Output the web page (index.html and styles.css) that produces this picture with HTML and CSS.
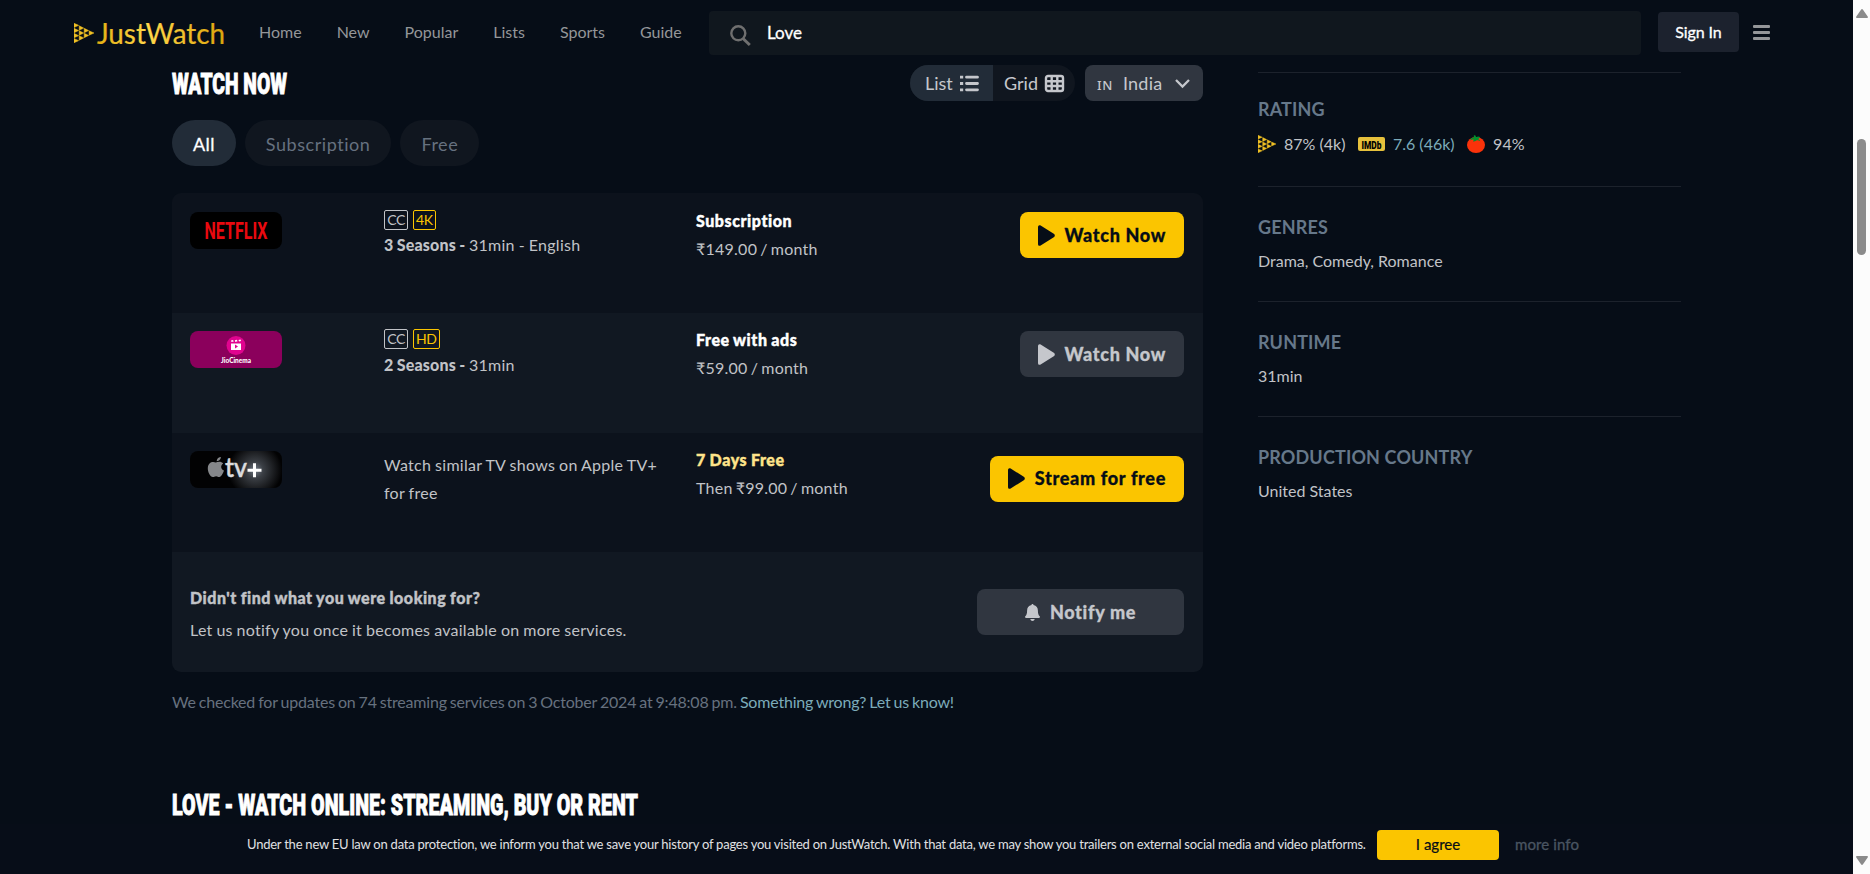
FILE: index.html
```html
<!DOCTYPE html>
<html lang="en">
<head>
<meta charset="utf-8">
<title>Love - JustWatch</title>
<link rel="stylesheet" href="styles.css">
</head>
<body>
<svg class="defs" width="0" height="0">
  <defs>
    <linearGradient id="gold" x1="0" x2="1" y1="0" y2="0"><stop offset="0" stop-color="#e3b012"/><stop offset=".4" stop-color="#ffd84a"/><stop offset="1" stop-color="#dba40a"/></linearGradient>
    <radialGradient id="glow" gradientUnits="userSpaceOnUse" cx="65" cy="19" r="27"><stop offset="0" stop-color="#737c88"/><stop offset=".3" stop-color="#3b3f45"/><stop offset="1" stop-color="#020203"/></radialGradient>
    <symbol id="jw" viewBox="0 0 18 22" preserveAspectRatio="none">
      <path fill="#f0c024" stroke="#f0c024" stroke-width=".5" d="M0 .3l4.200 2.300L0 5zM0 5.800l4.200 2.500L0 10.700zM0 11.400l4.200 2.500L0 16.300zM0 17l4.200 2.400L0 21.700zM4.700 3.100l4 2.500-4 2.400zM4.700 8.600l4 2.400-4 2.400zM4.700 14l4 2.400-4 2.500zM9.200 5.900l4 2.400-4 2.400zM9.200 11.300l4 2.400-4 2.400zM13.600 8.600L18 11l-4.400 2.400z"/>
    </symbol>
    <symbol id="play" viewBox="0 0 18 22" preserveAspectRatio="none"><path fill="currentColor" d="M0 2.200C0 .5 1.300-.4 2.800.5l13.900 8.700c1.500.9 1.500 2.700 0 3.600L2.800 21.500C1.300 22.400 0 21.500 0 19.800z"/></symbol>
  </defs>
</svg>
<div class="page">
  <header class="bar">
    <a class="logo"><svg width="152" height="36" viewBox="0 0 152 36"><use href="#jw" x="0" y="5" width="20" height="20"/><text class="wordmark" x="23" y="25.500" textLength="128" lengthAdjust="spacingAndGlyphs" fill="url(#gold)" stroke="url(#gold)">JustWatch</text></svg></a>
    <nav class="nav"><a>Home</a><a>New</a><a>Popular</a><a>Lists</a><a>Sports</a><a>Guide</a></nav>
    <div class="search">
      <svg width="21" height="21" viewBox="0 0 21 21" fill="none" stroke="#6f6f6f" stroke-width="2.400"><circle cx="8.300" cy="8.300" r="7"/><path d="M13 13.500l6.800 6.500" stroke-width="3"/></svg>
      <span>Love</span>
    </div>
    <button class="signin">Sign In</button>
    <div class="burger"><i></i><i></i><i></i></div>
  </header>

  <div class="columns">
    <main class="main">
      <div class="titlebar">
        <svg class="heading" width="120" height="36"><text x="0" y="28.500" textLength="115" lengthAdjust="spacingAndGlyphs">WATCH NOW</text></svg>
        <div class="controls">
          <div class="toggle">
            <span class="seg on">List <svg width="19" height="17" viewBox="0 0 19 17" fill="none" stroke="currentColor" stroke-width="2.800"><path stroke-linecap="round" d="M6.500 2.200h11M6.500 8.500h11M6.500 14.800h11"/><path d="M0 2.200h3.200M0 8.500h3.200M0 14.800h3.200"/></svg></span>
            <span class="seg">Grid <svg width="19" height="17" viewBox="0 0 19 17" fill="none" stroke="currentColor" stroke-width="2.400"><rect x="1" y="1" width="17" height="15" rx="2"/><path d="M1 6.200h17M1 11h17M6.700 1v15M12.300 1v15"/></svg></span>
          </div>
          <div class="country"><small>IN</small><span>India</span><svg width="15" height="9" viewBox="0 0 15 9" fill="none" stroke="currentColor" stroke-width="2.300"><path d="M1 1l6.500 6.500L14 1"/></svg></div>
        </div>
      </div>
      <div class="filters"><span class="pill on">All</span><span class="pill">Subscription</span><span class="pill">Free</span></div>

      <section class="offers">
        <div class="row">
          <svg class="provider" width="92" height="37"><rect width="92" height="37" fill="#000"/><text class="netflix" x="14.500" y="26.500" textLength="63" lengthAdjust="spacingAndGlyphs">NETFLIX</text></svg>
          <div class="info"><div class="tags"><b class="tag">CC</b><b class="tag gold">4K</b></div><p class="up"><strong>3 Seasons - </strong>31min - English</p></div>
          <div class="price"><strong>Subscription</strong><span>₹149.00 / month</span></div>
          <button class="btn"><svg width="17" height="21"><use href="#play" width="17" height="21"/></svg>Watch Now</button>
        </div>
        <div class="row alt">
          <svg class="provider" width="92" height="37"><rect width="92" height="37" fill="#8b005c"/><circle cx="46" cy="14.500" r="9.500" fill="#e0048f"/><path fill="#fff" d="M41 12.500h10v6.500h-10zM41 9.500l2-.6.8 1.600-2.300.6zM44.800 9.300l2-.6.8 1.600-2.300.6zM48.500 9l2-.6.6 1.600-2.100.6z"/><path fill="#e0048f" d="M45 13.500l3 2-3 2z"/><text class="jio" x="31" y="32.300" textLength="30" lengthAdjust="spacingAndGlyphs">JioCinema</text></svg>
          <div class="info"><div class="tags"><b class="tag">CC</b><b class="tag gold">HD</b></div><p><strong>2 Seasons - </strong>31min</p></div>
          <div class="price"><strong>Free with ads</strong><span>₹59.00 / month</span></div>
          <button class="btn grey"><svg width="17" height="21"><use href="#play" width="17" height="21"/></svg>Watch Now</button>
        </div>
        <div class="row similar">
          <svg class="provider" width="92" height="37"><rect width="92" height="37" fill="url(#glow)"/><path fill="#85878a" d="M30.800 6c.2 2-1.700 4.200-4 4.200C26.600 8.100 28.600 6.100 30.800 6zM33.200 12.400c-3 1.800-2.500 5.900.8 7.200-.8 2.500-2.600 6.300-4.600 6.500-1.300.1-1.700-.8-3.300-.8s-2.100.8-3.300.8c-2.600-.1-5-5-5-8.600 0-6.500 5.300-7.600 8-5.900 1.900-1.100 5.600-1.600 7.400.8z"/><text class="tv" x="35" y="26" textLength="22" lengthAdjust="spacingAndGlyphs">tv</text><path stroke="#fff" stroke-width="3" d="M57.500 19.300h14M64.500 12.300v14"/></svg>
          <div class="info"><p>Watch similar TV shows on Apple TV+ for free</p></div>
          <div class="price"><strong class="promo">7 Days Free</strong><span>Then ₹99.00 / month</span></div>
          <button class="btn"><svg width="17" height="21"><use href="#play" width="17" height="21"/></svg>Stream for free</button>
        </div>
        <div class="row alt notify">
          <div class="ask"><strong>Didn't find what you were looking for?</strong><span>Let us notify you once it becomes available on more services.</span></div>
          <button class="btn grey wide"><svg width="15" height="17" viewBox="0 0 15 17" fill="currentColor"><path d="M6.500 1c0-1.300 2-1.300 2 0 3 .6 4.400 2.800 4.400 5.500 0 3.400.7 4.700 1.800 5.800.6.700.2 1.700-.8 1.700H1.100c-1 0-1.400-1-.8-1.700C1.400 11.200 2.100 9.900 2.100 6.500 2.100 3.800 3.500 1.600 6.500 1zM5.300 15h4.400c-.3 2.600-4.100 2.600-4.400 0z"/></svg>Notify me</button>
        </div>
      </section>
      <p class="checked">We checked for updates on 74 streaming services on 3 October 2024 at 9:48:08 pm. <a>Something wrong? Let us know!</a></p>
      <svg class="heading second" width="470" height="40"><text x="0" y="29" textLength="466" lengthAdjust="spacingAndGlyphs">LOVE - WATCH ONLINE: STREAMING, BUY OR RENT</text></svg>
    </main>

    <aside class="side">
      <section><h3>RATING</h3>
        <div class="scores"><svg width="18" height="18"><use href="#jw" width="18" height="18"/></svg><span class="s1">87% (4k)</span>
        <svg width="27" height="14"><rect width="27" height="14" rx="2" fill="#e6c13c"/><text class="imdb" x="3.500" y="11.500" textLength="20" lengthAdjust="spacingAndGlyphs">IMDb</text></svg><span class="s2">7.6 (46k)</span>
        <svg width="18" height="18" viewBox="0 0 18 18"><ellipse cx="9" cy="10" rx="9" ry="8" fill="#fa320a"/><path fill="#00912d" d="M8 0l1.300 2.200c1.500-.9 3-.8 4 .5-1 .2-1.600.7-2 1.500 1 .3 1.700 1 1.900 2-1.400-.9-2.600-1.100-3.800-.8C8.500 6.200 7.300 6.600 5.900 6.500c.6-.6.800-1.200.7-1.900-1.400 0-2.400.3-3.200 1C3.400 3.700 4.800 2.400 7 2.600L6.700.8z"/></svg><span>94%</span></div></section>
      <section><h3>GENRES</h3><p>Drama, Comedy, Romance</p></section>
      <section><h3>RUNTIME</h3><p>31min</p></section>
      <section><h3>PRODUCTION COUNTRY</h3><p>United States</p></section>
    </aside>
  </div>

  <footer class="cookie"><span>Under the new EU law on data protection, we inform you that we save your history of pages you visited on JustWatch. With that data, we may show you trailers on external social media and video platforms.</span><button>I agree</button><a>more info</a></footer>
</div>
<div class="scrollbar">
  <svg width="12" height="9" viewBox="0 0 12 9"><path fill="#8b8b8b" d="M5 .8a1.200 1.200 0 0 1 2 0l4.700 6.700c.5.8.1 1.500-.8 1.500H1.100c-.9 0-1.300-.7-.8-1.500z"/></svg>
  <div class="thumb"></div>
  <svg width="12" height="9" viewBox="0 0 12 9"><path fill="#8b8b8b" d="M5 8.200a1.200 1.200 0 0 0 2 0l4.700-6.700C12.200.7 11.800 0 10.900 0H1.100C.2 0-.2.7.3 1.500z"/></svg>
</div>
</body>
</html>
```
FILE: styles.css
```css
* { box-sizing: border-box; }
body { margin: 0; display: flex; width: 1870px; height: 874px; overflow: hidden; background: #060d17; color: #c1c3c7; font: 16px/24px Lato, "Noto Sans", sans-serif; }
p, h3 { margin: 0; }
button { border: 0; font-family: inherit; }
svg { display: block; flex: none; overflow: visible; }
.defs { position: absolute; }
.page { width: 1853px; height: 874px; display: flex; flex-direction: column; }

.bar { height: 65px; flex: none; display: flex; align-items: flex-start; padding-left: 74px; }
.logo { width: 152px; margin-top: 18px; }
.wordmark { font: 28px Lato; stroke-width: .2px; }
.nav { display: flex; width: 483px; padding: 20px 0 0 33px; gap: 35px; color: #949699; }
.search { width: 932px; height: 44px; margin-top: 11px; padding-left: 21px; border-radius: 4px; background: #10171e; display: flex; align-items: center; gap: 16px; color: #fff; font-size: 17px; }
.search svg { margin-top: 4px; }
.search span { margin-top: -1px; -webkit-text-stroke: .3px #fff; }
.signin { width: 81px; height: 40px; margin: 12px 0 0 17px; border-radius: 4px; background: #1c222e; color: #fff; font-size: 16px; letter-spacing: -.1px; padding: 0 0 1px; -webkit-text-stroke: .3px #fff; }
.burger { margin: 25px 0 0 14px; width: 17px; display: flex; flex-direction: column; gap: 3.500px; }
.burger i { height: 2.500px; background: #949699; border-radius: 1px; }

.columns { display: flex; gap: 55px; padding-left: 172px; flex: 1; min-height: 0; }
.main { width: 1031px; }
.titlebar { display: flex; justify-content: space-between; height: 36px; }
.heading { font: 900 30px Roboto; fill: #fff; stroke: #fff; stroke-width: .9px; }
.controls { display: flex; gap: 10px; color: #c5c7cc; font-size: 18px; }
.toggle { display: flex; width: 165px; border-radius: 18px; overflow: hidden; background: #10161f; }
.seg { display: flex; align-items: center; gap: 7px; padding-left: 11px; flex: 1; white-space: nowrap; }
.seg.on { flex: none; width: 83px; padding-left: 15px; background: #222c38; }
.country { width: 118px; border-radius: 8px; background: #303640; display: flex; align-items: center; padding-left: 12px; }
.country small { font: 500 13px "Noto Sans"; width: 26px; padding-top: 3px; letter-spacing: .7px; }
.country span { width: 52px; letter-spacing: .2px; }
.filters { display: flex; gap: 9px; margin-top: 19px; }
.pill { height: 46px; padding: 0 21px; border-radius: 23px; background: #10161f; color: #66717f; font-size: 18px; line-height: 49px; letter-spacing: .55px; }
.pill.on { background: #222c38; color: #fff; -webkit-text-stroke: .3px #fff; letter-spacing: .4px; }

.offers { margin-top: 27px; height: 479px; border-radius: 9px; overflow: hidden; display: grid; grid-template-rows: 120px 120px 119px 120px; }
.row { background: #0c121c; display: grid; grid-template-columns: 194px 312px 1fr auto; align-items: start; padding: 19px 19px 0 18px; }
.row.alt { background: #111822; padding-top: 18px; }
.provider { border-radius: 8px; overflow: hidden; }
.netflix { font: 700 23px Roboto; fill: #e9090f; }
.jio { font: 900 6.500px Lato; fill: #fff; }
.tv { font: 500 26px Lato; fill: #dcdcdf; stroke: #dcdcdf; stroke-width: .5px; }
.tags { display: flex; gap: 5px; margin-top: -2px; }
.tag { width: 24px; height: 20px; border: 1px solid #c1c3c7; border-radius: 2px; text-align: center; font-size: 14px; line-height: 17px; font-weight: 400; letter-spacing: -.4px; }
.tag.gold { width: auto; padding: 0 2px; color: #fbc500; border-color: #fbc500; }
.info p { margin-top: 4px; letter-spacing: .28px; word-spacing: -.5px; }
.info p.up { margin-top: 3px; }
.info p strong { font-weight: 900; letter-spacing: .14px; }
.price { display: grid; line-height: 28px; margin-top: -5px; letter-spacing: .25px; word-spacing: -1.300px; }
.price strong { color: #fff; font-weight: 900; letter-spacing: .56px; word-spacing: -.6px; -webkit-text-stroke: .4px; }
.price .promo { color: #ffe48a; }
.similar { padding-top: 18px; }
.similar .info p { line-height: 28px; margin-top: 0; width: 290px; }
.similar .btn { margin-top: 5px; padding-bottom: 2px; }
.btn { height: 46px; padding: 0 18px; border-radius: 8px; background: #fbc500; color: #060d17; font-size: 18px; font-weight: 900; letter-spacing: .68px; -webkit-text-stroke: .3px; display: flex; align-items: center; justify-content: center; gap: 10px; }
.btn.grey { background: #303640; color: #c5c7cc; }
.btn.wide { width: 207px; }
.row.notify { display: flex; justify-content: space-between; padding-top: 37px; }
.ask { display: grid; line-height: 32px; margin-top: -7px; letter-spacing: .26px; word-spacing: -.5px; }
.ask strong { font-weight: 900; letter-spacing: .53px; -webkit-text-stroke: .4px; }
.checked { margin-top: 18px; color: #66717f; letter-spacing: -.19px; word-spacing: -.9px; white-space: nowrap; }
.checked a { color: #7cabba; }
.second { margin-top: 71.500px; }

.side { width: 423px; padding-top: 7px; }
.side section { border-top: 1px solid #1c222c; height: 115px; padding-top: 27px; }
.side h3 { font-size: 18px; line-height: 26px; font-weight: 700; color: #66788a; letter-spacing: .15px; }
.side p { margin-top: 9px; }
.side section:first-child { height: 114px; padding-top: 23px; }
.scores { display: flex; align-items: center; margin-top: 10px; }
.scores span { margin-left: 8px; }
.s1, .s2 { margin-right: 12.500px; }
.s2 { color: #7cabba; }
.imdb { font: 900 11px Roboto; fill: #000; }

.cookie { height: 50px; flex: none; padding-left: 247px; display: flex; align-items: center; background: #070d18; font-size: 13px; color: #e0e1e3; white-space: nowrap; padding-bottom: 8px; }
.cookie span { width: 1130px; letter-spacing: -.23px; margin-top: -2px; }
.cookie button { width: 122px; height: 30px; border-radius: 4px; background: #fbc500; font-size: 15px; color: #060d17; padding: 0 0 2px; -webkit-text-stroke: .2px; }
.cookie a { margin: -2px 0 0 16px; font-size: 15px; letter-spacing: .1px; color: #4a5562; -webkit-text-stroke: .3px; }

.scrollbar { width: 17px; background: #fcfcfc; display: flex; flex-direction: column; align-items: center; padding: 9px 0; }
.thumb { width: 9px; height: 116px; border-radius: 5px; background: #8b8b8b; margin: 121px 0 auto; }
```
